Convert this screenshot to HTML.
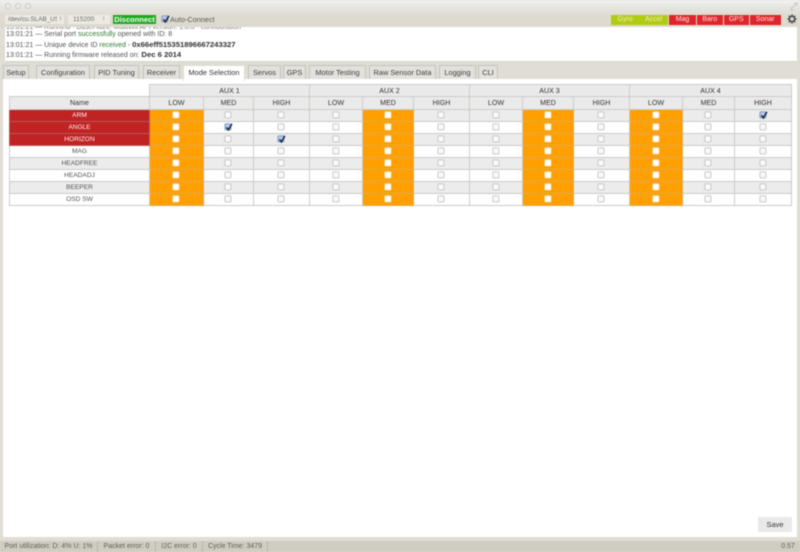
<!DOCTYPE html>
<html><head><meta charset="utf-8"><style>
*{box-sizing:border-box}
html,body{margin:0;padding:0;width:800px;height:552px;overflow:hidden;background:#e0ddd4}
body{font-family:"Liberation Sans",sans-serif;color:#444;position:relative;filter:blur(.4px)}
.a{position:absolute}
#top{left:0;top:0;width:800px;height:28px;background:linear-gradient(#f2f2f2 0,#e8e7e4 6px,#dedcd2 15px,#dcd9cd 100%)}
.dot{top:3px;width:6px;height:6px;border:1px solid #c8c8c8;border-radius:50%;background:#ececec}
.sel{top:15px;height:9px;background:#eceae3;font-size:6.4px;line-height:9px;color:#666;white-space:nowrap;overflow:hidden}
#disc{left:113px;top:15px;width:43px;height:9px;background:#1fa81f;color:#f4fff4;font-size:7.5px;font-weight:bold;line-height:9px;text-align:center}
.sens{top:15px;height:9.5px;font-size:7px;line-height:10px;text-align:center;color:#f6e4d8}
#log{left:5px;top:27px;width:792px;height:35px;background:#fff;border-bottom:1px solid #d4d2ca;overflow:hidden;font-size:7px;color:#555}
#log div{position:absolute;left:1px;white-space:nowrap;line-height:10px}
#log b{color:#333;font-size:7.7px}#log u{text-decoration:none;color:#2e7d32}
#tabbar{left:0;top:62px;width:800px;height:18px;background:#e0ddd4}
.tab{top:65px;height:14px;background:#e2e1dd;border:1px solid #c4c3bd;border-bottom:0;font-size:7.4px;line-height:13px;text-align:center;color:#3f3f3f;white-space:nowrap}
.tab.on{background:#fff;height:16px;border-color:#dedcd5;color:#333;z-index:3}
#main{left:3px;top:79px;width:794px;height:458px;background:#fff;border-left:0;border-right:0}
table{position:absolute;left:9px;top:84px;width:782px;border-collapse:collapse;table-layout:fixed;font-size:6.6px;text-align:center;color:#444}
td,th{border:1px solid #cbcbc8;padding:0;height:12px;font-weight:normal;line-height:10px;overflow:hidden}
th{background:#eaeaea;color:#333;font-size:7.1px}
th.n{border:0;background:#fff}
tbody tr:nth-child(odd) td{background:#ececec}
tbody tr:nth-child(even) td{background:#fff}
tbody tr td:nth-child(2),tbody tr td:nth-child(6),tbody tr td:nth-child(9),tbody tr td:nth-child(11){background:#ff9f00;border-color:#e0a850}
tbody td:first-child{color:#555}
tbody tr.r td:first-child{background:#c12222;color:#fff0f0;border-color:#b85a5a}
i{display:block;width:7px;height:7px;margin:0 auto;border:1px solid #c8c8c8;border-radius:1.5px;background:#fafafa;position:relative;transform:translate(-.6px,-.6px)}
td:nth-child(2) i,td:nth-child(6) i,td:nth-child(9) i,td:nth-child(11) i{background:#fff;border-color:#f6e6c6}
i svg{position:absolute;left:-1px;top:-2px}
i.c{background:#b9cde6;border-color:#7f9cc4}
#save{left:758px;top:517px;width:34px;height:15px;background:#e9e9e9;font-size:7.5px;line-height:15px;text-align:center;color:#333}
#foot{left:0;top:541px;width:800px;height:11px;background:#cfcdc1;font-size:7px;line-height:11px;color:#5f5f58}
#foot span{position:absolute;top:0;height:11px;white-space:nowrap;text-align:center;border-right:1px solid #b8b6aa}
</style></head><body>
<div class="a" id="top"></div>
<div class="a dot" style="left:5px"></div><div class="a dot" style="left:15px"></div><div class="a dot" style="left:25px"></div>
<svg class="a" style="left:790px;top:2px" width="8" height="9" viewBox="0 0 8 9"><path d="M1 7L7 1M4 1H7V4M1 5V8H4" stroke="#c8c8c8" stroke-width="1" fill="none"/></svg>
<div class="a sel" style="left:5px;width:59px;padding-left:3px">/dev/cu.SLAB_US<span class="a" style="left:52px;top:0;width:7px;text-align:center;background:#eceae3;font-size:6px">&#8597;</span></div>
<div class="a sel" style="left:68px;width:42px;padding-left:5px;letter-spacing:.1px">115200<span class="a" style="left:34px;top:0;font-size:6px">&#8597;</span></div>
<div class="a" id="disc">Disconnect</div>
<i class="a c" style="left:161.5px;top:16px;margin:0;width:7px;height:7px"><svg width="9" height="9" viewBox="0 0 9 9"><path d="M2 5L4 7.5L7.5 1.5" stroke="#1a2a4a" stroke-width="1.6" fill="none"/></svg></i>
<div class="a" style="left:170px;top:14px;font-size:7.3px;line-height:12px;color:#555">Auto-Connect</div>
<div class="a sens" style="left:611px;width:28px;background:#b0cc10">Gyro</div>
<div class="a sens" style="left:639px;width:29px;background:#b0cc10">Accel</div>
<div class="a sens" style="left:669px;width:27px;background:#e0242c">Mag</div>
<div class="a sens" style="left:696.5px;width:26.5px;background:#e0242c">Baro</div>
<div class="a sens" style="left:723.5px;width:25.5px;background:#e0242c">GPS</div>
<div class="a sens" style="left:749.5px;width:31.5px;background:#e0242c">Sonar</div>
<svg class="a" style="left:787px;top:14px" width="10" height="10" viewBox="0 0 12 12"><circle cx="6" cy="6" r="3.2" fill="none" stroke="#505050" stroke-width="2"/><path d="M6 .5V3M6 9V11.5M.5 6H3M9 6H11.5M2.1 2.1L3.9 3.9M8.1 8.1L9.9 9.9M2.1 9.9L3.9 8.1M8.1 3.9L9.9 2.1" stroke="#505050" stroke-width="1.8"/></svg>

<div class="a" id="log">
<div style="top:-1px;left:1px;color:#777;height:3px;overflow:hidden;line-height:4px">13:01:21 &mdash; Running - BaseFlight, MultiWii API version: 1.8.0 - configuration</div>
<div style="top:3px">13:01:21 &mdash; Serial port <u>successfully</u> opened with ID: 8</div>
<div style="top:13px">13:01:21 &mdash; Unique device ID <u>received</u> - <b>0x66eff515351896667243327</b></div>
<div style="top:22.5px">13:01:21 &mdash; Running firmware released on: <b>Dec 6 2014</b></div>
</div>
<div class="a" id="tabbar"></div>
<div class="a" id="main"></div>
<div class="a tab" style="left:3px;width:26px">Setup</div>
<div class="a tab" style="left:36px;width:54px">Configuration</div>
<div class="a tab" style="left:94px;width:45px">PID Tuning</div>
<div class="a tab" style="left:143px;width:37px">Receiver</div>
<div class="a tab on" style="left:183px;width:62px">Mode Selection</div>
<div class="a tab" style="left:248px;width:33px">Servos</div>
<div class="a tab" style="left:283px;width:23px">GPS</div>
<div class="a tab" style="left:309px;width:57px">Motor Testing</div>
<div class="a tab" style="left:369px;width:67px">Raw Sensor Data</div>
<div class="a tab" style="left:439px;width:37px">Logging</div>
<div class="a tab" style="left:478px;width:20px">CLI</div>

<table>
<colgroup><col style="width:140px"><col style="width:54px"><col style="width:50px"><col style="width:56px"><col style="width:53px"><col style="width:51px"><col style="width:56px"><col style="width:53px"><col style="width:51px"><col style="width:56px"><col style="width:53px"><col style="width:52px"><col style="width:57px"></colgroup>
<thead>
<tr><th class="n"></th><th colspan="3">AUX 1</th><th colspan="3">AUX 2</th><th colspan="3">AUX 3</th><th colspan="3">AUX 4</th></tr>
<tr style="height:13px"><th>Name</th><th>LOW</th><th>MED</th><th>HIGH</th><th>LOW</th><th>MED</th><th>HIGH</th><th>LOW</th><th>MED</th><th>HIGH</th><th>LOW</th><th>MED</th><th>HIGH</th></tr>
</thead>
<tbody>
<tr class="r"><td>ARM</td><td><i></i></td><td><i></i></td><td><i></i></td><td><i></i></td><td><i></i></td><td><i></i></td><td><i></i></td><td><i></i></td><td><i></i></td><td><i></i></td><td><i></i></td><td><i class="c"><svg width="9" height="9" viewBox="0 0 9 9"><path d="M2 5L4 7.5L7.5 1.5" stroke="#1a2a4a" stroke-width="1.6" fill="none"/></svg></i></td></tr>
<tr class="r"><td>ANGLE</td><td><i></i></td><td><i class="c"><svg width="9" height="9" viewBox="0 0 9 9"><path d="M2 5L4 7.5L7.5 1.5" stroke="#1a2a4a" stroke-width="1.6" fill="none"/></svg></i></td><td><i></i></td><td><i></i></td><td><i></i></td><td><i></i></td><td><i></i></td><td><i></i></td><td><i></i></td><td><i></i></td><td><i></i></td><td><i></i></td></tr>
<tr class="r"><td>HORIZON</td><td><i></i></td><td><i></i></td><td><i class="c"><svg width="9" height="9" viewBox="0 0 9 9"><path d="M2 5L4 7.5L7.5 1.5" stroke="#1a2a4a" stroke-width="1.6" fill="none"/></svg></i></td><td><i></i></td><td><i></i></td><td><i></i></td><td><i></i></td><td><i></i></td><td><i></i></td><td><i></i></td><td><i></i></td><td><i></i></td></tr>
<tr><td>MAG</td><td><i></i></td><td><i></i></td><td><i></i></td><td><i></i></td><td><i></i></td><td><i></i></td><td><i></i></td><td><i></i></td><td><i></i></td><td><i></i></td><td><i></i></td><td><i></i></td></tr>
<tr><td>HEADFREE</td><td><i></i></td><td><i></i></td><td><i></i></td><td><i></i></td><td><i></i></td><td><i></i></td><td><i></i></td><td><i></i></td><td><i></i></td><td><i></i></td><td><i></i></td><td><i></i></td></tr>
<tr><td>HEADADJ</td><td><i></i></td><td><i></i></td><td><i></i></td><td><i></i></td><td><i></i></td><td><i></i></td><td><i></i></td><td><i></i></td><td><i></i></td><td><i></i></td><td><i></i></td><td><i></i></td></tr>
<tr><td>BEEPER</td><td><i></i></td><td><i></i></td><td><i></i></td><td><i></i></td><td><i></i></td><td><i></i></td><td><i></i></td><td><i></i></td><td><i></i></td><td><i></i></td><td><i></i></td><td><i></i></td></tr>
<tr><td>OSD SW</td><td><i></i></td><td><i></i></td><td><i></i></td><td><i></i></td><td><i></i></td><td><i></i></td><td><i></i></td><td><i></i></td><td><i></i></td><td><i></i></td><td><i></i></td><td><i></i></td></tr>
</tbody>
</table>
<div class="a" id="save">Save</div>
<div class="a" id="foot">
<span style="left:0;width:98px">Port utilization: D: 4% U: 1%</span>
<span style="left:98px;width:58px">Packet error: 0</span>
<span style="left:156px;width:47px">I2C error: 0</span>
<span style="left:203px;width:65px">Cycle Time: 3479</span>
<span style="left:778px;width:20px;border:0">0.57</span>
</div>
</body></html>
